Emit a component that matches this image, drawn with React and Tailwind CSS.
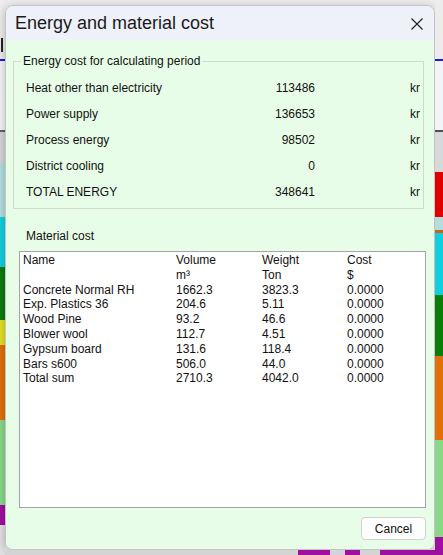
import React from "react";

const font = { fontFamily: '"Liberation Sans", Arial, sans-serif' };

function LeftStrip() {
  return (
    <div className="flex w-[5px] shrink-0 flex-col">
      <div className="h-[38px] bg-[#ececec]" />
      <div className="flex h-[14px] bg-[#ececec]">
        <div className="ml-[1px] w-[2px] bg-[#222]" />
      </div>
      <div className="h-[7px] bg-[#ececec]" />
      <div className="h-[2px] bg-[#1a1ae0]" />
      <div className="h-[69px] bg-[#f4f4f4]" />
      <div className="h-[2px] bg-[#606060]" />
      <div className="h-[31px] bg-[#d4d4d4]" />
      <div className="h-[54px] bg-[#b4dede]" />
      <div className="h-[50px] bg-[#10d0e0]" />
      <div className="h-[53px] bg-[#0b7d0b]" />
      <div className="h-[25px] bg-[#e0e020]" />
      <div className="h-[75px] bg-[#e07008]" />
      <div className="h-[85px] bg-[#88d888]" />
      <div className="h-[20px] bg-[#a010a0]" />
      <div className="h-[30px] bg-[#e0e0e0]" />
    </div>
  );
}

function RightStrip() {
  return (
    <div className="flex w-[8px] shrink-0 flex-col">
      <div className="h-[59px] bg-[#ececec]" />
      <div className="h-[2px] bg-[#1a1ae0]" />
      <div className="h-[69px] bg-[#f4f4f4]" />
      <div className="h-[2px] bg-[#505050]" />
      <div className="h-[40px] bg-[#d8d8d8]" />
      <div className="h-[45px] bg-[#e00000]" />
      <div className="h-[13px] bg-[#b4dede]" />
      <div className="h-[3px] bg-[#c86414]" />
      <div className="h-[62px] bg-[#10d0e0]" />
      <div className="h-[61px] bg-[#0b7d0b]" />
      <div className="h-[84px] bg-[#e07008]" />
      <div className="h-[97px] bg-[#88d888]" />
      <div className="h-[18px] bg-[#a010a0]" />
    </div>
  );
}

function BottomStrip() {
  return (
    <div className="flex h-[5px] bg-[#d4d4d4]">
      <div className="w-[293px]" />
      <div className="w-[32px] bg-[#a010a0]" />
      <div className="w-[15px]" />
      <div className="w-[15px] bg-[#a010a0]" />
      <div className="w-[20px]" />
      <div className="w-[55px] bg-[#a010a0]" />
    </div>
  );
}

const energyRows = [
  ["Heat other than electricity", "113486"],
  ["Power supply", "136653"],
  ["Process energy", "98502"],
  ["District cooling", "0"],
  ["TOTAL ENERGY", "348641"],
];

const materials = [
  ["Name", "Volume", "Weight", "Cost"],
  ["", "m\u00b3", "Ton", "$"],
  ["Concrete Normal RH", "1662.3", "3823.3", "0.0000"],
  ["Exp. Plastics 36", "204.6", "5.11", "0.0000"],
  ["Wood Pine", "93.2", "46.6", "0.0000"],
  ["Blower wool", "112.7", "4.51", "0.0000"],
  ["Gypsum board", "131.6", "118.4", "0.0000"],
  ["Bars s600", "506.0", "44.0", "0.0000"],
  ["Total sum", "2710.3", "4042.0", "0.0000"],
];

function Dialog() {
  return (
    <div className="flex h-[545px] w-[430px] flex-col overflow-hidden rounded-[8px] border border-[#c4c4c4] shadow-[0_2px_8px_rgba(0,0,0,0.25)]">
      <div className="flex h-[34px] shrink-0 items-center bg-[#eef1f9] pl-[9px] pr-[11px] text-[18px] text-[#1a1a1a]">
        <span className="flex-1 leading-none">Energy and material cost</span>
        <svg width="12" height="12" viewBox="0 0 12 12" className="mt-[1px]">
          <path d="M0.5 0.5 L11.5 11.5 M11.5 0.5 L0.5 11.5" stroke="#222" strokeWidth="1.2" fill="none" />
        </svg>
      </div>
      <div className="flex flex-1 flex-col bg-[#e8fde8] text-[12px] text-[#111]">
        <fieldset className="ml-[7px] mt-[13px] w-[411px] border border-[#d2dad2] pb-[3px] pl-[12px] pr-[3px] pt-[6px]">
          <legend className="-ml-[5px] px-[2px] leading-[16px]">Energy cost for calculating period</legend>
          {energyRows.map(([label, value]) => (
            <div key={label} className="flex h-[26px] items-center">
              <span className="flex-1">{label}</span>
              <span className="w-[80px] text-right">{value}</span>
              <span className="w-[105px] text-right">kr</span>
            </div>
          ))}
        </fieldset>
        <div className="ml-[20px] mt-[19px] leading-[16px]">Material cost</div>
        <div className="ml-[13px] mt-[7px] h-[257px] w-[407px] border border-[#a4a4a4] bg-white pl-[3px] pt-[1px]">
          {materials.map((r, i) => (
            <div key={i} className="grid grid-cols-[153px_86px_85px_1fr] leading-[14.8px]">
              <span>{r[0]}</span>
              <span>{r[1]}</span>
              <span>{r[2]}</span>
              <span>{r[3]}</span>
            </div>
          ))}
        </div>
        <div className="mt-[9px] flex justify-end pr-[8px]">
          <button className="flex h-[23px] w-[65px] items-center justify-center rounded-[4px] border border-[#d0d0d0] bg-[#fdfdfd] text-[12px] text-[#111]">
            Cancel
          </button>
        </div>
      </div>
    </div>
  );
}

export default function App() {
  return (
    <div className="flex h-[555px] w-[443px] overflow-hidden bg-[#ececec]" style={font}>
      <LeftStrip />
      <div className="flex w-[430px] shrink-0 flex-col">
        <div className="h-[5px] bg-[#ececec]" />
        <Dialog />
        <BottomStrip />
      </div>
      <RightStrip />
    </div>
  );
}
